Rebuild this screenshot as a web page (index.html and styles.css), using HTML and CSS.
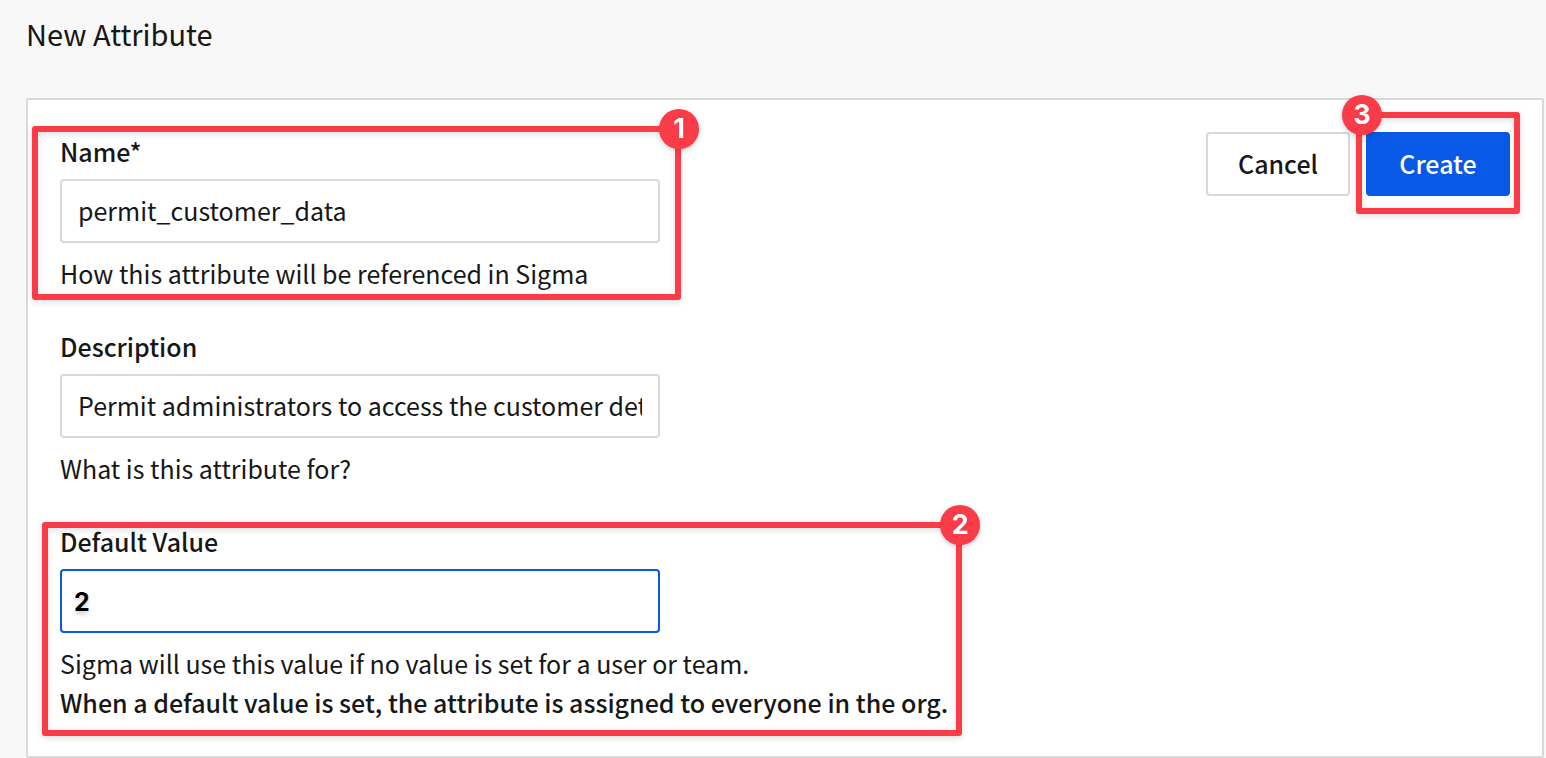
FILE: index.html
```
<!DOCTYPE html>
<html lang="en">
<head>
<meta charset="utf-8">
<title>New Attribute</title>
<link rel="stylesheet" href="styles.css">
</head>
<body>
<main class="page">
  <h1 class="title">New Attribute</h1>
  <form class="card">
    <div class="fields">
      <div class="field">
        <label class="label" for="name">Name*</label>
        <input class="input" id="name" type="text" value="permit_customer_data">
        <p class="hint">How this attribute will be referenced in Sigma</p>
        <div class="callout callout-name"><span class="badge">1</span></div>
      </div>
      <div class="field">
        <label class="label" for="description">Description</label>
        <input class="input" id="description" type="text" value="Permit administrators to access the customer details">
        <p class="hint">What is this attribute for?</p>
      </div>
      <div class="field">
        <label class="label" for="default">Default Value</label>
        <input class="input input-active" id="default" type="text" value="2">
        <p class="hint">Sigma will use this value if no value is set for a user or team.<br><strong>When a default value is set, the attribute is assigned to everyone in the org.</strong></p>
        <div class="callout callout-default"><span class="badge">2</span></div>
      </div>
    </div>
    <div class="actions">
      <button class="button" type="button">Cancel</button>
      <button class="button button-primary" type="button">Create</button>
      <div class="callout callout-create"><span class="badge badge-left">3</span></div>
    </div>
  </form>
</main>
</body>
</html>
```
FILE: styles.css
```
* { box-sizing: border-box; }
body {
  margin: 0;
  background: #f8f8f8;
  color: #171717;
  font: 25px/39px "Noto Sans CJK SC", "Noto Sans", sans-serif;
}
.page { padding: 13px 2px 0 26px; }
.title { margin: 0 0 45px; font-size: 29px; line-height: 40px; font-weight: 400; }
.card {
  display: flex;
  justify-content: space-between;
  align-items: flex-start;
  padding: 32px 32px 34px;
  border: 2px solid #d9d9d9;
  border-radius: 2px;
  background: #fff;
}
.fields { display: flex; flex-direction: column; gap: 34px; }
.field { position: relative; width: max-content; }
.label { display: block; margin-bottom: 9px; line-height: 38px; font-weight: 500; }
.input {
  display: block;
  width: 600px;
  height: 64px;
  padding: 0 16px 2px;
  border: 2px solid #d9d9d9;
  border-radius: 4px;
  outline: 0;
  background: #fff;
  color: inherit;
  font: inherit;
}
.input-active {
  padding: 2px 12px 0;
  border-color: #0859e6;
  color: #000;
  font: 700 25px "Inter", sans-serif;
  text-shadow: 0 3px 4px #0003;
}
.hint { margin: 11px 0 0; }
.hint strong { font-weight: 500; }
.actions { position: relative; display: flex; gap: 16px; }
.button {
  width: 144px;
  height: 64px;
  padding: 0 0 2px;
  border: 2px solid #d9d9d9;
  border-radius: 4px;
  background: #fff;
  color: inherit;
  font: inherit;
  font-weight: 500;
}
.button-primary { border-color: #0859e6; background: #0859e6; color: #fff; }
.callout {
  position: absolute;
  border: 6px solid #f93c47;
  border-radius: 3px;
  pointer-events: none;
  filter: drop-shadow(0 2px 3px #0002);
}
.callout-name { inset: -6px -21px -7px -28px; }
.callout-default { inset: 0 -14px -14px -18px; }
.callout-create { inset: -20px -10px -18px 150px; }
.badge {
  position: absolute;
  top: -23px;
  right: -24px;
  width: 40px;
  height: 40px;
  border-radius: 50%;
  background: #f93c47;
  box-shadow: 0 1px 3px #0002;
  color: #fff;
  font: 700 27px/40px "Inter", sans-serif;
  text-align: center;
}
.badge-left { right: auto; left: -20px; }
```
